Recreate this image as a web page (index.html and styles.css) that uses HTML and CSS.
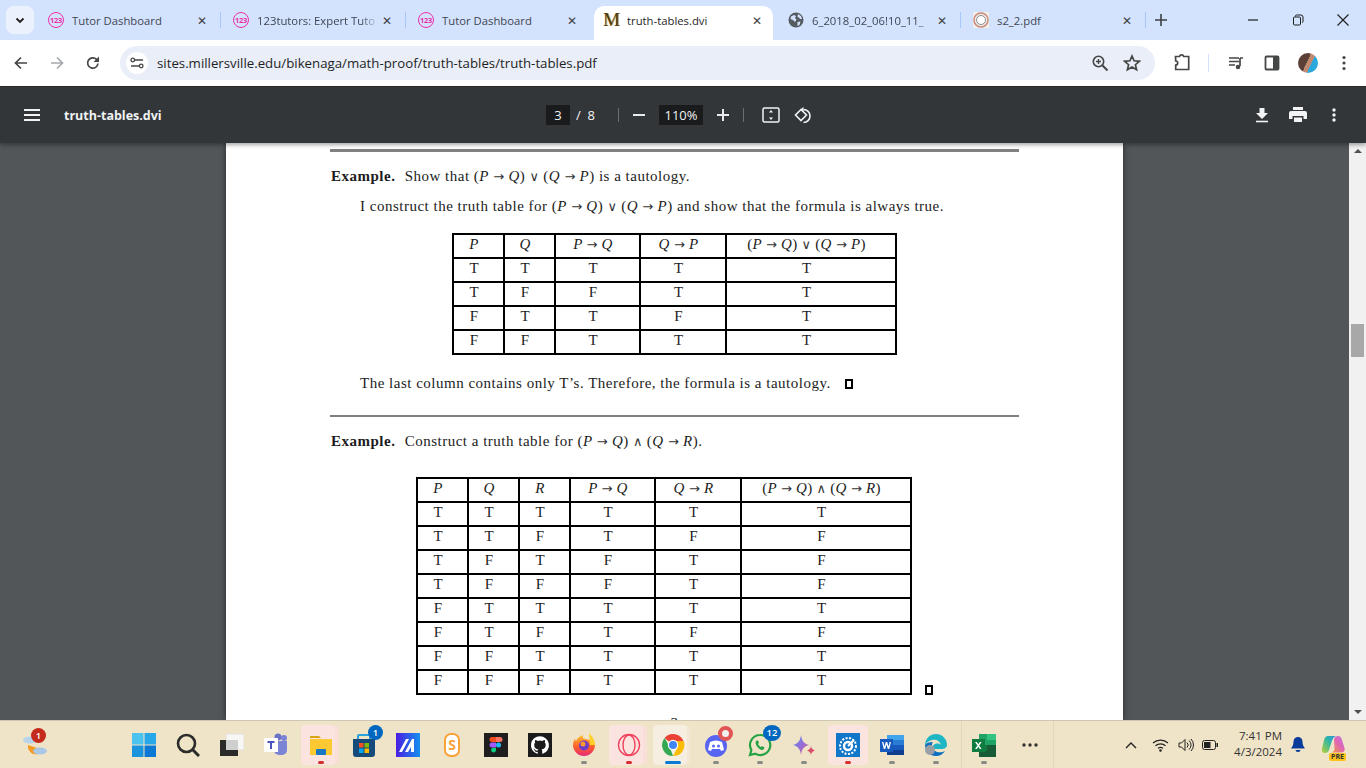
FILE: index.html
```html
<!DOCTYPE html>
<html lang="en">
<head>
    <meta charset="UTF-8">
    <meta name="viewport" content="width=device-width, initial-scale=1.0">
    <title>truth-tables.dvi</title>
    <link rel="stylesheet" href="styles.css">
</head>
<body>
    <div class="tabstrip">
        <button class="tab-search">
            <svg width="12" height="12" viewBox="0 0 12 12"><path d="M2.500 4.500 6 8l3.500-3.500" fill="none" stroke="#1f1f1f" stroke-width="1.800"/></svg>
        </button>
        <div class="tab">
            <span class="fav-123">123</span>
            <span class="tab-title">Tutor Dashboard</span>
            <span class="tab-close">✕</span>
        </div>
        <div class="tab">
            <span class="fav-123">123</span>
            <span class="tab-title fade">123tutors: Expert Tuto</span>
            <span class="tab-close">✕</span>
        </div>
        <div class="tab no-sep">
            <span class="fav-123">123</span>
            <span class="tab-title">Tutor Dashboard</span>
            <span class="tab-close">✕</span>
        </div>
        <div class="tab active">
            <span class="fav-m">M</span>
            <span class="tab-title">truth-tables.dvi</span>
            <span class="tab-close">✕</span>
        </div>
        <div class="tab">
            <svg class="fav" viewBox="0 0 16 16"><circle cx="8" cy="8" r="7.500" fill="#555a60"/><path d="M3 4.500 6 3l2 1-1 2 1.500 1.500L7 10 5 8 2.500 7zM10 2l3 2 1 3-2 0-1-1.500-1.500-.5zM9.500 10l3-.5-1 3.500-2 1z" fill="#d3e3fd"/></svg>
            <span class="tab-title fade">6_2018_02_06!10_11_</span>
            <span class="tab-close">✕</span>
        </div>
        <div class="tab">
            <svg class="fav" viewBox="0 0 16 16"><rect width="16" height="16" fill="#f4ece6"/><circle cx="8" cy="8" r="7" fill="none" stroke="#c98a7c" stroke-width="1.500"/><circle cx="8" cy="8" r="4.500" fill="#fff" stroke="#8a8f94"/></svg>
            <span class="tab-title">s2_2.pdf</span>
            <span class="tab-close">✕</span>
        </div>
        <svg class="new-tab" width="14" height="14" viewBox="0 0 14 14"><path d="M7 1v12M1 7h12" stroke="#3c4043" stroke-width="1.600"/></svg>
        <div class="window-controls">
            <svg width="12" height="12" viewBox="0 0 12 12"><path d="M1 6h10" stroke="#1f1f1f" stroke-width="1.200"/></svg>
            <svg width="12" height="12" viewBox="0 0 12 12"><path d="M3.500 2.500V2a1 1 0 0 1 1-1h4.500a2 2 0 0 1 2 2v4.500a1 1 0 0 1-1 1M1.500 4a1 1 0 0 1 1-1h5a1 1 0 0 1 1 1v6a1 1 0 0 1-1 1h-5a1 1 0 0 1-1-1z" fill="none" stroke="#1f1f1f"/></svg>
            <svg width="12" height="12" viewBox="0 0 12 12"><path d="M.5.500l11 11M11.500.500l-11 11" stroke="#1f1f1f" stroke-width="1.100"/></svg>
        </div>
    </div>

    <div class="toolbar">
        <div class="nav-btn"><svg width="16" height="16" viewBox="0 0 16 16"><path d="M14 8H3M8 2.500 2.500 8 8 13.500" fill="none" stroke="#444746" stroke-width="1.700"/></svg></div>
        <div class="nav-btn"><svg width="16" height="16" viewBox="0 0 16 16"><path d="M2 8h11M8 2.500 13.500 8 8 13.500" fill="none" stroke="#a5a8ad" stroke-width="1.700"/></svg></div>
        <div class="nav-btn"><svg width="16" height="16" viewBox="0 0 16 16"><path d="M13 8.500A5.200 5.200 0 1 1 11.500 4.300L13.500 6" fill="none" stroke="#444746" stroke-width="1.700"/><path d="M14 1.500V7H8.500z" fill="#444746"/></svg></div>
        <div class="omnibox">
            <span class="site-info">
                <svg width="14" height="14" viewBox="0 0 14 14"><path d="M5 4h8M1 10h8" stroke="#444746" stroke-width="1.500"/><circle cx="2.800" cy="4" r="1.800" fill="none" stroke="#444746" stroke-width="1.300"/><circle cx="11.200" cy="10" r="1.800" fill="none" stroke="#444746" stroke-width="1.300"/></svg>
            </span>
            <span class="url">sites.millersville.edu/bikenaga/math-proof/truth-tables/truth-tables.pdf</span>
            <svg class="omni-icon" width="18" height="18" viewBox="0 0 18 18"><circle cx="7.500" cy="7.500" r="5.200" fill="none" stroke="#444746" stroke-width="1.600"/><path d="m11.500 11.500 5 5" stroke="#444746" stroke-width="2"/><path d="M7.500 5v5M5 7.500h5" stroke="#444746" stroke-width="1.400"/></svg>
            <svg class="omni-icon star" width="18" height="18" viewBox="0 0 18 18"><path d="m9 2 2.100 4.800 5.200.5-3.900 3.400 1.200 5.100L9 13.100l-4.600 2.700 1.200-5.100-3.900-3.400 5.200-.5z" fill="none" stroke="#444746" stroke-width="1.700"/></svg>
        </div>
        <div class="tool-icons">
            <svg class="ext" width="18" height="18" viewBox="0 0 18 18"><path d="M2.500 2.500h4a2.200 2.200 0 0 1 4.200 0h5v13h-13V11a2 2 0 0 0 0-4z" fill="none" stroke="#444746" stroke-width="1.700"/></svg>
            <span class="tool-sep"></span>
            <svg class="media" width="16" height="16" viewBox="0 0 16 16"><path d="M1 3h10M1 6.500h10M1 10h6" stroke="#444746" stroke-width="1.500"/><path d="M12 3h3M12 3v8" stroke="#444746" stroke-width="1.700"/><circle cx="10" cy="12" r="2.300" fill="#444746"/></svg>
            <svg class="panel" width="16" height="16" viewBox="0 0 16 16"><rect x="1.500" y="1.500" width="13" height="13" rx="1" fill="none" stroke="#444746" stroke-width="1.800"/><rect x="9" y="2" width="5" height="12" fill="#444746"/></svg>
            <span class="avatar"></span>
            <svg class="kebab" width="4" height="16" viewBox="0 0 4 16"><circle cx="2" cy="2.500" r="1.600" fill="#444746"/><circle cx="2" cy="8" r="1.600" fill="#444746"/><circle cx="2" cy="13.500" r="1.600" fill="#444746"/></svg>
        </div>
    </div>

    <div class="pdf-bar">
        <svg class="menu-icon" width="16" height="12" viewBox="0 0 16 12"><path d="M0 1h16M0 6h16M0 11h16" stroke="#f1f3f4" stroke-width="2"/></svg>
        <span class="pdf-title">truth-tables.dvi</span>
        <div class="pdf-controls">
            <span class="num-box page-box">3</span>
            <span class="page-total">/&nbsp;&nbsp;8</span>
            <span class="bar-sep"></span>
            <svg class="zoom-out" width="12" height="12" viewBox="0 0 12 12"><path d="M0 6h12" stroke="#e8eaed" stroke-width="2"/></svg>
            <span class="num-box zoom-box">110%</span>
            <svg width="12" height="12" viewBox="0 0 12 12"><path d="M0 6h12M6 0v12" stroke="#e8eaed" stroke-width="2"/></svg>
            <span class="bar-sep sep-right"></span>
            <svg class="fit-icon" width="18" height="16" viewBox="0 0 18 16"><rect x="1" y="1" width="16" height="14" rx="1.500" fill="none" stroke="#f1f3f4" stroke-width="1.500"/><path d="m9 3 2 2.500H7zM9 13l2-2.500H7z" fill="#f1f3f4"/></svg>
            <svg class="rotate-icon" width="18" height="18" viewBox="0 0 18 18"><path d="M7 3.500 1.500 9 7 14.500 12.500 9z" fill="none" stroke="#f1f3f4" stroke-width="1.600"/><path d="M9.500 3.500a6.500 6.500 0 0 1 0 13" fill="none" stroke="#f1f3f4" stroke-width="1.600"/><path d="M9.500 .8v5.400L6.800 3.500z" fill="#f1f3f4"/></svg>
        </div>
        <div class="pdf-actions">
            <svg width="14" height="16" viewBox="0 0 14 16"><path d="M4.500 1h5v5H13L7 12 1 6h3.500z" fill="#f1f3f4"/><path d="M1 14.500h12" stroke="#f1f3f4" stroke-width="1.600"/></svg>
            <svg width="18" height="16" viewBox="0 0 18 16"><path d="M4 0h10v3H4zM2 4h14a2 2 0 0 1 2 2v6h-3.500V9h-11v3H0V6a2 2 0 0 1 2-2zM5 10.500h8V15H5z" fill="#f1f3f4"/></svg>
            <svg class="pdf-more" width="4" height="14" viewBox="0 0 4 14"><circle cx="2" cy="2" r="1.700" fill="#f1f3f4"/><circle cx="2" cy="7" r="1.700" fill="#f1f3f4"/><circle cx="2" cy="12" r="1.700" fill="#f1f3f4"/></svg>
        </div>
    </div>

    <div class="viewer">
        <div class="pdf-pane">
            <div class="page">
                <div class="rule rule-thick"></div>
                <p class="statement"><b>Example.</b> Show that (<i>P</i> <span class="sym">→</span> <i>Q</i>) <span class="sym">∨</span> (<i>Q</i> <span class="sym">→</span> <i>P</i>) is a tautology.</p>
                <p class="indent line-2">I construct the truth table for (<i>P</i> <span class="sym">→</span> <i>Q</i>) <span class="sym">∨</span> (<i>Q</i> <span class="sym">→</span> <i>P</i>) and show that the formula is always true.</p>
                <div class="table-wrap wrap-1">
                    <table class="truth t-small">
                        <colgroup><col class="w51"><col class="w51"><col class="w85"><col class="w86"><col class="w170"></colgroup>
                        <tr><th>P</th><th>Q</th><th>P <span class="sym">→</span> Q</th><th>Q <span class="sym">→</span> P</th><th><span class="up">(</span>P <span class="sym">→</span> Q<span class="up">)</span> <span class="sym">∨</span> <span class="up">(</span>Q <span class="sym">→</span> P<span class="up">)</span></th></tr>
                        <tr><td>T</td><td>T</td><td>T</td><td>T</td><td>T</td></tr>
                        <tr><td>T</td><td>F</td><td>F</td><td>T</td><td>T</td></tr>
                        <tr><td>F</td><td>T</td><td>T</td><td>F</td><td>T</td></tr>
                        <tr><td>F</td><td>F</td><td>T</td><td>T</td><td>T</td></tr>
                    </table>
                </div>
                <p class="indent line-last">The last column contains only T’s. Therefore, the formula is a tautology.<span class="qed qed-inline"></span></p>
                <div class="rule rule-thin"></div>
                <p class="statement statement-2"><b>Example.</b> Construct a truth table for (<i>P</i> <span class="sym">→</span> <i>Q</i>) <span class="sym">∧</span> (<i>Q</i> <span class="sym">→</span> <i>R</i>).</p>
                <div class="table-wrap wrap-2">
                    <table class="truth t-big">
                        <colgroup><col class="w51"><col class="w51"><col class="w51"><col class="w85"><col class="w86"><col class="w170"></colgroup>
                        <tr><th>P</th><th>Q</th><th>R</th><th>P <span class="sym">→</span> Q</th><th>Q <span class="sym">→</span> R</th><th><span class="up">(</span>P <span class="sym">→</span> Q<span class="up">)</span> <span class="sym">∧</span> <span class="up">(</span>Q <span class="sym">→</span> R<span class="up">)</span></th></tr>
                        <tr><td>T</td><td>T</td><td>T</td><td>T</td><td>T</td><td>T</td></tr>
                        <tr><td>T</td><td>T</td><td>F</td><td>T</td><td>F</td><td>F</td></tr>
                        <tr><td>T</td><td>F</td><td>T</td><td>F</td><td>T</td><td>F</td></tr>
                        <tr><td>T</td><td>F</td><td>F</td><td>F</td><td>T</td><td>F</td></tr>
                        <tr><td>F</td><td>T</td><td>T</td><td>T</td><td>T</td><td>T</td></tr>
                        <tr><td>F</td><td>T</td><td>F</td><td>T</td><td>F</td><td>F</td></tr>
                        <tr><td>F</td><td>F</td><td>T</td><td>T</td><td>T</td><td>T</td></tr>
                        <tr><td>F</td><td>F</td><td>F</td><td>T</td><td>T</td><td>T</td></tr>
                    </table>
                    <span class="qed"></span>
                </div>
                <p class="page-number">3</p>
            </div>
        </div>
        <div class="scrollbar">
            <span class="arrow-up"></span>
            <span class="thumb"></span>
            <span class="arrow-down"></span>
        </div>
    </div>

    <div class="taskbar">
        <div class="weather">
            <svg width="26" height="26" viewBox="0 0 26 26"><path d="M6 13a8 8 0 0 0 15 5z" fill="#f59a23"/><ellipse cx="8" cy="8" rx="7" ry="3.500" fill="#b9d3ea"/><ellipse cx="18" cy="19" rx="7" ry="3.500" fill="#a9c8e6"/></svg>
            <span class="badge badge-red">1</span>
        </div>
        <div class="apps">
            <div class="app"><svg viewBox="0 0 24 24"><path d="M0 0h11.500v11.500H0z" fill="#4cc2ee"/><path d="M12.500 0H24v11.500H12.500z" fill="#28a8e8"/><path d="M0 12.500h11.500V24H0z" fill="#1a94dd"/><path d="M12.500 12.500H24V24H12.500z" fill="#0a78d4"/></svg></div>
            <div class="app"><svg viewBox="0 0 24 24"><circle cx="10.500" cy="10.500" r="8.500" fill="none" stroke="#2b2b2b" stroke-width="2.600"/><path d="m17 17 6 6" stroke="#2b2b2b" stroke-width="3"/></svg></div>
            <div class="app"><svg viewBox="0 0 24 24"><rect x="6" y="1" width="18" height="16" fill="#f7f7f5"/><rect x="6" y="1" width="18" height="16" fill="none" stroke="#e4e0d8"/><rect y="7" width="18" height="16" fill="#2a2a2a"/><rect x="6" y="7" width="12" height="10" fill="#cfcfcf"/></svg></div>
            <div class="app"><svg viewBox="0 0 24 24"><circle cx="20" cy="5" r="3" fill="#7b83d4"/><circle cx="14" cy="4" r="3.500" fill="#6b73c8"/><path d="M10 8h13v9a5 5 0 0 1-5 5h-3a5 5 0 0 1-5-5z" fill="#7b83d4"/><rect y="5" width="14" height="14" fill="#fff"/><path d="M3.500 8h7v2H8v6H6v-6H3.500z" fill="#4b53bc"/></svg></div>
            <div class="app hl hl-red"><svg viewBox="0 0 24 24"><path d="M1 3h9l2 2H1z" fill="#d9a514"/><path d="M1 6h22v16H1z" fill="#fcc933"/><rect x="7" y="16" width="10" height="6" rx="1" fill="#1678c4"/></svg></div>
            <div class="app"><svg viewBox="0 0 24 24"><path d="M1 6h22v15a3 3 0 0 1-3 3H4a3 3 0 0 1-3-3z" fill="#164a7a"/><path d="M6 6V3a1 1 0 0 1 1-1h10a1 1 0 0 1 1 1v3" fill="none" stroke="#2aa0dc" stroke-width="2"/><path d="M7 10h4.500v4.500H7z" fill="#f25022"/><path d="M12.500 10H17v4.500h-4.500z" fill="#7fba00"/><path d="M7 15.500h4.500V20H7z" fill="#00a4ef"/><path d="M12.500 15.500H17V20h-4.500z" fill="#ffb900"/></svg><span class="badge badge-blue">1</span></div>
            <div class="app"><svg viewBox="0 0 24 24"><defs><linearGradient id="maGrad" x1="0" x2="1"><stop offset="0" stop-color="#4a1ee0"/><stop offset="1" stop-color="#1590f0"/></linearGradient></defs><rect width="24" height="24" fill="url(#maGrad)"/><path d="M3 19 10 6h3L6 19zM9 19 16 6h2v13h-3v-5l-3 5z" fill="#fff"/></svg></div>
            <div class="app"><span class="sub-s">S</span></div>
            <div class="app"><svg viewBox="0 0 24 24"><rect width="24" height="24" fill="#1e1e1e"/><path d="M8 4h4v5H8a2.500 2.500 0 0 1 0-5z" fill="#f24e1e"/><path d="M12 4h4a2.500 2.500 0 0 1 0 5h-4z" fill="#ff7262"/><path d="M8 9.500h4v5H8a2.500 2.500 0 0 1 0-5z" fill="#a259ff"/><circle cx="14.500" cy="12" r="2.500" fill="#1abcfe"/><path d="M8 15h4v2.500a2.500 2.500 0 1 1-4-2.500z" fill="#0acf83"/></svg></div>
            <div class="app"><svg viewBox="0 0 24 24"><rect width="24" height="24" fill="#1b1b1b"/><path transform="translate(3 3) scale(.75)" d="M12 .3a12 12 0 0 0-3.800 23.400c.6.100.8-.3.800-.6v-2c-3.300.7-4-1.600-4-1.600-.6-1.400-1.400-1.800-1.400-1.800-1-.7.100-.7.100-.7 1.200.1 1.800 1.200 1.800 1.200 1 1.800 2.800 1.300 3.500 1 .1-.8.400-1.300.8-1.600-2.700-.3-5.500-1.300-5.500-6 0-1.200.5-2.300 1.200-3.100-.1-.4-.5-1.600.1-3.200 0 0 1-.3 3.400 1.200a11.500 11.500 0 0 1 6 0c2.300-1.500 3.300-1.200 3.300-1.200.7 1.600.2 2.800.1 3.200.8.800 1.200 1.900 1.200 3.100 0 4.600-2.800 5.700-5.500 6 .4.400.8 1.100.8 2.200v3.300c0 .3.200.7.800.6A12 12 0 0 0 12 .3z" fill="#fff"/></svg></div>
            <div class="app dot"><svg viewBox="0 0 24 24"><defs><linearGradient id="ffGrad" x1="0" y1="0" x2="0" y2="1"><stop offset="0" stop-color="#ffc02c"/><stop offset=".6" stop-color="#ff5a2c"/><stop offset="1" stop-color="#e3287c"/></linearGradient></defs><path d="M12 23a11 11 0 0 1-11-11c0-3 1-5 2-6l1 2c1-3 4-5 7-6-1 3 1 4 3 4 4 1 9 2 9 6 0 6-5 11-11 11z" fill="url(#ffGrad)"/><path d="M17 0c2 2 6 6 6 12h-5z" fill="#ffd02c"/><circle cx="12" cy="12.500" r="5" fill="#6b3bc9"/><circle cx="11" cy="11" r="2.500" fill="#ff9a2c"/></svg></div>
            <div class="app hl hl-red"><svg viewBox="0 0 24 24"><circle cx="12" cy="12" r="10.500" fill="none" stroke="#f0425c" stroke-width="1.400"/><ellipse cx="12" cy="12" rx="6" ry="10" fill="none" stroke="#f0425c" stroke-width="1.400"/></svg></div>
            <div class="app hl hl-blue"><svg viewBox="0 0 24 24"><path d="M12 12 3.600 5A11 11 0 0 1 22.700 9H12z" fill="#ea4335"/><path d="M12 23A11 11 0 0 1 3.600 5L9 14.500z" fill="#34a853"/><path d="M12 23 16.500 14.500 12 8h10.700A11 11 0 0 1 12 23z" fill="#fbbc05"/><circle cx="12" cy="12" r="5.200" fill="#fff"/><circle cx="12" cy="12" r="4" fill="#4285f4"/></svg></div>
            <div class="app dot"><svg viewBox="0 0 24 24"><circle cx="12" cy="13" r="11" fill="#5865f2"/><path d="M6 9c4-2 8-2 12 0l2 8-3 1-1-2H8l-1 2-3-1z" fill="#fff"/><circle cx="9.500" cy="13" r="1.500" fill="#5865f2"/><circle cx="14.500" cy="13" r="1.500" fill="#5865f2"/></svg><span class="badge badge-dot"></span></div>
            <div class="app dot"><svg viewBox="0 0 24 24"><path d="M12 2a10 10 0 0 0-8.600 15L2 22l5.200-1.400A10 10 0 1 0 12 2z" fill="none" stroke="#25a244" stroke-width="2.200"/><path d="M8.500 7.500c-1.500 1.500-1 4 1 6.500s4.500 3.500 6 2.500l1-2-2.500-1.500-1 1c-1.500-.7-2.500-2-3-3l1-1-1-2.500z" fill="#25a244"/></svg><span class="badge badge-blue badge-wide">12</span></div>
            <div class="app dot"><svg viewBox="0 0 24 24"><defs><linearGradient id="gemGrad" x1="0" y1="0" x2="1" y2="1"><stop offset="0" stop-color="#4b8df0"/><stop offset=".55" stop-color="#9a6cd8"/><stop offset="1" stop-color="#e0566a"/></linearGradient></defs><path d="M9 2c.8 6 3 8.500 8 10-5 1.500-7.200 4-8 10-.8-6-3-8.500-8-10 5-1.500 7.200-4 8-10z" fill="url(#gemGrad)"/><path d="M19 13c.4 2.500 1.500 3.600 4 4.500-2.500.9-3.600 2-4 4.500-.4-2.500-1.500-3.600-4-4.500 2.500-.9 3.600-2 4-4.500z" fill="#d9506c"/></svg></div>
            <div class="app hl hl-red hl-wide"><svg viewBox="0 0 24 24"><rect width="24" height="24" fill="#1277c8"/><circle cx="12" cy="13" r="8" fill="none" stroke="#fff" stroke-width="2" stroke-dasharray="2 1.500"/><circle cx="12" cy="13" r="4" fill="none" stroke="#fff" stroke-width="2.500"/><path d="m12 13 6-6" stroke="#fff" stroke-width="2"/></svg></div>
            <div class="app dot"><svg viewBox="0 0 24 24"><path d="M7 2h17v5H7z" fill="#41a5ee"/><path d="M7 7h17v5H7z" fill="#2b7cd3"/><path d="M7 12h17v5H7z" fill="#185abd"/><path d="M7 17h17v5H7z" fill="#103f91"/><rect y="6" width="13" height="13" fill="#185abd"/><path d="m2 9 1.800 7h1.400l1.300-4.500L7.800 16h1.400L11 9H9.600l-1 4.500L7.200 9H5.800l-1.300 4.500L3.400 9z" fill="#fff"/></svg></div>
            <div class="app dot"><svg viewBox="0 0 24 24"><path d="M1 12a11 11 0 0 1 22 0c0 3-3 4-6 4H8c0-5 6-7 9-4-1-4-5-6-9-5-4 1-6 3-7 5z" fill="#1fb6c4"/><path d="M1 12c0 6 5 11 11 11 4 0 7-2 9-5-5 3-13 1-13-6 0-1 0-2 1-3-4 0-7 1-8 3z" fill="#0c6fc0"/><circle cx="6" cy="17" r="5" fill="#9aa0a6"/></svg></div>
        </div>
        <div class="pinned-end">
            <div class="app dot"><svg viewBox="0 0 24 24"><path d="M7 1h17v23H7z" fill="#21a366"/><path d="M15 1h9v6h-9z" fill="#33c481"/><path d="M7 12h8v6H7z" fill="#107c41"/><path d="M15 12h9v6h-9z" fill="#185c37"/><path d="M7 18h17v6H7z" fill="#185c37"/><rect y="6" width="13" height="13" fill="#107c41"/><path d="m3 9 2.400 3.500L3 16h1.800l1.500-2.300L7.800 16h1.800L7.200 12.500 9.600 9H7.800L6.300 11.300 4.800 9z" fill="#fff"/></svg></div>
            <svg class="more-apps" width="16" height="4" viewBox="0 0 16 4"><circle cx="2" cy="2" r="1.700" fill="#333"/><circle cx="8" cy="2" r="1.700" fill="#333"/><circle cx="14" cy="2" r="1.700" fill="#333"/></svg>
        </div>
        <div class="tray">
            <svg width="12" height="8" viewBox="0 0 12 8"><path d="M1 7l5-5 5 5" fill="none" stroke="#222" stroke-width="1.400"/></svg>
            <svg class="wifi" width="17" height="14" viewBox="0 0 17 14"><path d="M1 5a11 11 0 0 1 15 0M3.500 7.800a7.500 7.500 0 0 1 10 0M6 10.400a3.800 3.800 0 0 1 5 0" fill="none" stroke="#222" stroke-width="1.200"/><circle cx="8.500" cy="12.500" r="1.300" fill="#222"/></svg>
            <svg class="sound" width="16" height="14" viewBox="0 0 16 14"><path d="M1 5h2.500L7 1.500v11L3.500 9H1z" fill="none" stroke="#222"/><path d="M9 4.500a3.500 3.500 0 0 1 0 5M11 2.500a6 6 0 0 1 0 9M13 1a8.500 8.500 0 0 1 0 12" fill="none" stroke="#222"/></svg>
            <svg class="battery" width="16" height="10" viewBox="0 0 16 10"><rect x=".5" y=".5" width="13" height="9" rx="2" fill="none" stroke="#222"/><rect x="2" y="2" width="6.500" height="6" fill="#222"/><rect x="14.500" y="3" width="1.500" height="4" fill="#222"/></svg>
        </div>
        <div class="clock"><span>7:41 PM</span><span>4/3/2024</span></div>
        <svg class="bell" width="14" height="15" viewBox="0 0 14 15"><path d="M7 0a4.500 4.500 0 0 1 4.500 4.500c0 3.500 1 5 2.500 7H0c1.500-2 2.500-3.500 2.500-7A4.500 4.500 0 0 1 7 0z" fill="#0a3a9c"/><path d="M4.500 13h5a2.500 2 0 0 1-5 0z" fill="#0a3a9c"/></svg>
        <div class="copilot">
            <svg width="24" height="20" viewBox="0 0 24 20"><defs><linearGradient id="copA" x1="0" y1="1" x2="1" y2="0"><stop offset="0" stop-color="#b7d334"/><stop offset=".6" stop-color="#2fb5a8"/><stop offset="1" stop-color="#2f8fe0"/></linearGradient><linearGradient id="copB" x1="0" y1="1" x2="1" y2="0"><stop offset="0" stop-color="#f0a03c"/><stop offset=".55" stop-color="#e065b4"/><stop offset="1" stop-color="#b57ae6"/></linearGradient></defs><path d="M7 1h8c-3 1-4 4-5 8l-2 6c-.6 2-2 3-4 3-2.500 0-3.700-2-3-4.500L3 5c.7-2.500 2-4 4-4z" fill="url(#copA)"/><path d="M13 4c1-2 2-3 4-3 2.500 0 3.500 2 4 4l2.500 8c.7 2.500-1 4.500-3 4.500H10c2 0 3-1.500 3.500-3z" fill="url(#copB)"/></svg>
            <span class="pre">PRE</span>
        </div>
    </div>
</body>
</html>
```

FILE: styles.css
```css
* {
    box-sizing: border-box;
}
html, body {
    margin: 0;
    height: 768px;
    overflow: hidden;
}
body {
    display: flex;
    flex-direction: column;
    font-family: "Open Sans", "Noto Sans", sans-serif;
    background: #fff;
}
svg {
    display: block;
    flex: none;
}

/* tab strip */
.tabstrip {
    height: 40px;
    background: #d3e3fd;
    display: flex;
    align-items: flex-end;
    padding-left: 6px;
}
.tab-search {
    width: 28px;
    height: 28px;
    margin: 0 2px 6px 0;
    border: none;
    border-radius: 8px;
    background: #ecf2fd;
    display: flex;
    align-items: center;
    justify-content: center;
    padding: 0;
}
.tab {
    width: 185px;
    height: 34px;
    padding: 0 11px 6px 12px;
    display: flex;
    align-items: center;
    color: #3f4654;
    font-size: 11.300px;
    position: relative;
}
.tab::after {
    content: "";
    position: absolute;
    right: 0;
    top: 6px;
    height: 16px;
    width: 1.500px;
    background: #a8c7fa;
}
.tab.no-sep::after, .tab.active::after {
    display: none;
}
.tab.active {
    background: #fff;
    color: #1f1f1f;
    border-radius: 10px 10px 0 0;
    width: 179px;
    margin: 0 3px;
    padding-left: 9px;
    padding-right: 8px;
}
.tab-title {
    flex: 1;
    margin-left: 8px;
    white-space: nowrap;
    overflow: hidden;
}
.tab-title.fade {
    -webkit-mask-image: linear-gradient(to right, #000 85%, transparent);
    mask-image: linear-gradient(to right, #000 85%, transparent);
}
.tab-close {
    width: 16px;
    text-align: center;
    font-size: 12px;
    color: #3c4043;
}
.fav {
    width: 16px;
    height: 16px;
}
.fav-123 {
    width: 16px;
    height: 16px;
    flex: none;
    border: 1.500px solid #ec2fa8;
    border-radius: 50%;
    color: #ec2fa8;
    font-size: 7.500px;
    font-weight: 700;
    display: flex;
    align-items: center;
    justify-content: center;
    letter-spacing: -.3px;
}
.fav-m {
    width: 16px;
    flex: none;
    font: 400 19px "Liberation Serif", serif;
    color: #4a3c14;
    text-shadow: 1px 0 #c9a33c;
    text-align: center;
}
.new-tab {
    margin: 0 0 13px 8px;
}
.window-controls {
    margin-left: auto;
    display: flex;
    gap: 33px;
    padding: 0 17px 14px 0;
}
.window-controls svg {
    width: 12px;
}

/* address bar row */
.toolbar {
    height: 47px;
    padding: 0 0 1px 3px;
    display: flex;
    align-items: center;
    border-bottom: 1px solid #2a2c2e;
}
.nav-btn {
    width: 36px;
    display: flex;
    justify-content: center;
}
.omnibox {
    width: 1035px;
    height: 34px;
    margin-left: 9px;
    border-radius: 17px;
    background: #e9eef8;
    display: flex;
    align-items: center;
    padding: 0 14px 0 6px;
}
.site-info {
    width: 22px;
    height: 22px;
    border-radius: 50%;
    background: #fff;
    display: flex;
    align-items: center;
    justify-content: center;
}
.url {
    flex: 1;
    margin-left: 9px;
    font-size: 13.250px;
    color: #1f1f1f;
    white-space: nowrap;
}
.omni-icon.star {
    margin-left: 14px;
}
.tool-icons {
    flex: 1;
    display: flex;
    align-items: center;
    padding-left: 18px;
}
.tool-sep {
    width: 1px;
    height: 18px;
    margin: 0 19px 0 17px;
    background: #d3e3fd;
}
.panel {
    margin-left: 20px;
}
.avatar {
    width: 20px;
    height: 20px;
    margin-left: 18px;
    border-radius: 50%;
    background: linear-gradient(115deg, #5a4036 0 45%, #c08a70 45% 62%, #2aa7dc 62%);
}
.kebab {
    margin-left: 24px;
}

/* pdf viewer bar */
.pdf-bar {
    height: 56px;
    flex: none;
    background: #323639;
    color: #f1f3f4;
    display: flex;
    align-items: center;
    padding-left: 24px;
    box-shadow: 0 2px 4px rgba(0, 0, 0, .35);
    position: relative;
    z-index: 1;
}
.pdf-title {
    margin-left: 24px;
    width: 482px;
    font-size: 12.500px;
    font-weight: 700;
}
.pdf-controls {
    display: flex;
    align-items: center;
    font-size: 13px;
    width: 709px;
}
.num-box {
    height: 20px;
    background: #191b1c;
    display: flex;
    align-items: center;
    justify-content: center;
}
.page-box {
    width: 24px;
}
.page-total {
    margin-left: 6px;
    width: 42px;
}
.bar-sep {
    width: 1px;
    height: 14px;
    background: #6b6f72;
}
.zoom-out {
    margin-left: 14px;
}
.zoom-box {
    width: 44px;
    margin: 0 14px;
}
.sep-right {
    margin-left: 14px;
}
.fit-icon {
    margin-left: 18px;
}
.rotate-icon {
    margin-left: 14px;
}
.pdf-actions {
    display: flex;
    align-items: center;
    gap: 20px;
}
.pdf-more {
    margin-left: 5px;
}

/* document pane */
.viewer {
    height: 577px;
    flex: none;
    display: flex;
    overflow: hidden;
}
.pdf-pane {
    flex: 1;
    background: #525659;
    padding-left: 226px;
}
.page {
    width: 897px;
    height: 577px;
    overflow: hidden;
    background: #fff;
    padding: 6px 104px 0 104px;
    box-shadow: 0 0 6px rgba(0, 0, 0, .5);
    font-family: "Liberation Serif", serif;
    font-size: 15px;
    letter-spacing: .5px;
    color: #1c1c1c;
}
.page p {
    margin: 0;
    line-height: 18px;
    white-space: nowrap;
}
.sym {
    font-family: "DejaVu Sans", sans-serif;
    font-style: normal;
    font-size: 13px;
    letter-spacing: 0;
    color: #333;
}
.rule {
    background: #808080;
}
.rule-thick {
    height: 3px;
}
.rule-thin {
    height: 2px;
    margin-top: 23px;
}
.page .statement {
    margin-top: 15px;
    padding-left: 1px;
}
.page .statement-2 {
    margin-top: 15px;
}
.statement b {
    margin-right: 5px;
}
.indent {
    padding-left: 30px;
}
.page .line-2 {
    margin-top: 11px;
}
.page .line-last {
    margin-top: 19px;
}
.table-wrap {
    display: flex;
    justify-content: center;
    align-items: flex-end;
    gap: 13px;
}
.wrap-1 {
    margin-top: 17px;
}
.wrap-2 {
    margin-top: 26px;
}
.truth {
    border-collapse: collapse;
    table-layout: fixed;
    letter-spacing: 0;
}
.t-small {
    width: 445px;
}
.t-big {
    width: 496px;
}
.w51 { width: 51px; }
.w85 { width: 85px; }
.w86 { width: 86px; }
.w170 { width: 170px; }
.truth tr {
    height: 24px;
}
.truth th, .truth td {
    border: 2px solid #000;
    padding: 0 9px 3px 0;
    text-align: center;
    font-size: 15px;
    line-height: 19px;
}
.truth th {
    font-weight: 400;
    font-style: italic;
    letter-spacing: .35px;
}
.truth .up {
    font-style: normal;
}
.t-small th:nth-child(4), .t-small td:nth-child(4) {
    border-left-width: 1px;
}
.t-big th:nth-child(2), .t-big td:nth-child(2),
.t-big th:nth-child(3), .t-big td:nth-child(3),
.t-big th:nth-child(4), .t-big td:nth-child(4) {
    border-left-width: 1px;
}
.qed {
    width: 8px;
    height: 10px;
    border: 2px solid #000;
    display: block;
    flex: none;
}
.qed-inline {
    display: inline-block;
    margin-left: 14px;
    vertical-align: -1px;
}
.page .page-number {
    margin-top: 19px;
    text-align: center;
}

/* scrollbar */
.scrollbar {
    width: 17px;
    flex: none;
    background: #f1f1f1;
    display: flex;
    flex-direction: column;
    align-items: center;
    padding: 6px 0;
}
.arrow-up, .arrow-down {
    width: 0;
    height: 0;
    border-left: 4px solid transparent;
    border-right: 4px solid transparent;
}
.arrow-up {
    border-bottom: 4px solid #505050;
}
.arrow-down {
    border-top: 4px solid #505050;
    margin-top: auto;
}
.thumb {
    width: 13px;
    height: 33px;
    margin-top: 171px;
    background: #a8a8a8;
}

/* taskbar */
.taskbar {
    height: 48px;
    flex: none;
    background: #f0e4c8;
    border-top: 1px solid #cfc7b4;
    display: flex;
    align-items: center;
    font-size: 12px;
    color: #222;
}
.weather {
    width: 122px;
    padding-left: 22px;
    position: relative;
}
.apps {
    display: flex;
}
.app {
    width: 44px;
    height: 40px;
    flex: none;
    display: flex;
    align-items: center;
    justify-content: center;
    position: relative;
}
.app > svg {
    width: 24px;
    height: 24px;
}
.app.hl {
    background: #fbe4e0;
    border-radius: 4px;
    width: 34px;
    margin: 0 7px 0 3px;
    padding-left: 5px;
    box-shadow: 5px 0 0 -1px #f8dfd8;
}
.app.hl-blue {
    background: #f6eee0;
    box-shadow: 4px 0 0 -1px #f3e6d2;
}
.app.hl-wide {
    width: 40px;
    margin: 0 2px;
    padding-left: 0;
    box-shadow: none;
}
.app::after {
    position: absolute;
    bottom: 1px;
    left: 50%;
    margin-left: -3px;
    width: 6px;
    height: 3px;
    border-radius: 2px;
}
.app.dot::after, .app.hl::after {
    content: "";
}
.app.dot::after {
    background: #8a8a86;
}
.app.hl::after {
    left: calc(50% + 3px);
}
.app.hl-wide::after {
    left: 50%;
}
.app.hl-red::after {
    background: #d32f2f;
}
.app.hl-blue::after {
    background: #0a7bd4;
    width: 16px;
    margin-left: -8px;
}
.badge {
    position: absolute;
    display: flex;
    align-items: center;
    justify-content: center;
    width: 15px;
    height: 15px;
    border-radius: 50%;
    color: #fff;
    font-size: 9.500px;
    font-weight: 600;
}
.badge-red {
    background: #c42b1c;
    left: 31px;
    top: -4px;
}
.badge-blue {
    background: #0067c0;
    right: 3px;
    top: 0;
}
.badge-wide {
    right: 1px;
    width: 18px;
    height: 16px;
}
.badge-dot {
    background: #f0f0f0;
    border: 4px solid #e25555;
    right: 5px;
    top: 1px;
}
.sub-s {
    width: 16px;
    height: 24px;
    border-radius: 7px;
    border: 2px solid #f6a33a;
    background: #fff;
    color: #f6a33a;
    font-size: 14px;
    font-weight: 700;
    line-height: 20px;
    text-align: center;
}
.pinned-end {
    display: flex;
    align-items: center;
    margin-left: 3px;
    width: 93px;
    height: 47px;
    border-left: 1px solid #e3d7bb;
    border-right: 1px solid #e3d7bb;
}
.more-apps {
    margin-left: 16px;
}
.tray {
    display: flex;
    align-items: center;
    margin-left: 71px;
}
.wifi {
    margin-left: 15px;
}
.sound {
    margin-left: 9px;
}
.battery {
    margin-left: 8px;
}
.clock {
    width: 64px;
    display: flex;
    flex-direction: column;
    align-items: flex-end;
    font-size: 11.500px;
    line-height: 16px;
    color: #333;
    padding-bottom: 2px;
}
.bell {
    margin-left: 9px;
}
.copilot {
    margin-left: 16px;
    position: relative;
}
.pre {
    position: absolute;
    right: -1px;
    bottom: -6px;
    background: #ffc21a;
    border-radius: 2px;
    font-size: 7px;
    font-weight: 700;
    line-height: 8px;
    padding: 0 2px;
    color: #333;
}
```
